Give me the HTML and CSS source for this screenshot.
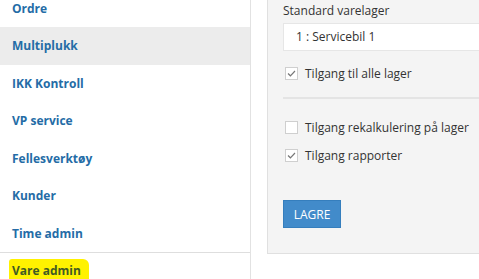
FILE: index.html
```html
<!DOCTYPE html>
<html lang="no">
<head>
  <meta charset="UTF-8" />
  <title>Vare admin</title>
  <link rel="stylesheet" href="styles.css">
</head>
<body>
  <nav class="sidebar">
    <ul class="menu">
      <li><a href="#">Ordre</a></li>
      <li class="active"><a href="#">Multiplukk</a></li>
      <li><a href="#">IKK Kontroll</a></li>
      <li><a href="#">VP service</a></li>
      <li><a href="#">Fellesverktøy</a></li>
      <li><a href="#">Kunder</a></li>
      <li><a href="#">Time admin</a></li>
      <li class="divider"><a href="#"><span class="marker">Vare admin</span></a></li>
    </ul>
  </nav>

  <main class="content">
    <div class="panel">
      <label class="field-label" for="lager">Standard varelager</label>
      <div class="select" id="lager">1 : Servicebil 1</div>

      <div class="check first">
        <span class="box checked">
          <svg width="9" height="7" viewBox="0 0 9 7"><path d="M1 3.5 L3.4 5.8 L8 1" fill="none" stroke="#777" stroke-width="1.2"/></svg>
        </span>
        Tilgang til alle lager
      </div>

      <hr class="sep">

      <div class="check">
        <span class="box"></span>
        Tilgang rekalkulering på lager
      </div>
      <div class="check">
        <span class="box checked">
          <svg width="9" height="7" viewBox="0 0 9 7"><path d="M1 3.5 L3.4 5.8 L8 1" fill="none" stroke="#777" stroke-width="1.2"/></svg>
        </span>
        Tilgang rapporter
      </div>

      <button class="btn" type="button">LAGRE</button>
    </div>
  </main>
</body>
</html>
```

FILE: styles.css
```css
body {
  margin: 0;
  height: 279px;
  overflow: hidden;
  display: flex;
  font-family: 'Open Sans', sans-serif;
  background: #fff;
  color: #333;
}

.sidebar {
  width: 250px;
  flex-shrink: 0;
  border-right: 1px solid #e2e2e2;
  overflow: hidden;
}

.menu {
  list-style: none;
  margin: -10.5px 0 0;
  padding: 0;
}

.menu li {
  height: 37.5px;
  display: flex;
  align-items: center;
  box-sizing: border-box;
}

.menu li.active {
  background: #ececec;
}

.menu li.divider {
  border-top: 1px solid #dedede;
}

.menu a {
  padding-left: 12px;
  font-size: 12px;
  font-weight: 700;
  color: #246ca6;
  text-decoration: none;
}

.marker {
  display: inline-block;
  margin-left: -3px;
  padding: 3px 8px 4px 3px;
  background: #fff200;
  color: #3f5a24;
  border-radius: 3px 6px 2px 5px;
}

.content {
  flex: 1;
  padding-left: 16px;
  min-width: 0;
}

.panel {
  height: 254px;
  box-sizing: border-box;
  background: #f4f4f4;
  border: 1px solid #e0e0e0;
  border-top: none;
  border-right: none;
  padding: 3px 0 0 15px;
  font-size: 12px;
}

.field-label {
  display: block;
  line-height: 16px;
  margin-bottom: 4px;
}

.select {
  height: 28px;
  box-sizing: border-box;
  background: #fff;
  border: 1px solid #e6e6e6;
  border-right: none;
  padding-left: 12px;
  line-height: 26px;
}

.check {
  display: flex;
  align-items: center;
  gap: 7px;
  height: 20px;
  margin-top: 8px;
  padding-left: 2px;
}

.check.first {
  margin-top: 12px;
}

.box {
  width: 13px;
  height: 13px;
  box-sizing: border-box;
  background: #fff;
  border: 1px solid #cfcfcf;
  display: flex;
  align-items: center;
  justify-content: center;
}

.sep {
  border: none;
  border-top: 2px solid #e4e4e4;
  margin: 14px 0 18px;
}

.btn {
  display: block;
  margin-top: 35px;
  width: 58px;
  height: 28px;
  background: #428bca;
  border: 1px solid #357ebd;
  color: #fff;
  font-family: 'Open Sans', sans-serif;
  font-size: 12px;
  padding: 0;
}
```
